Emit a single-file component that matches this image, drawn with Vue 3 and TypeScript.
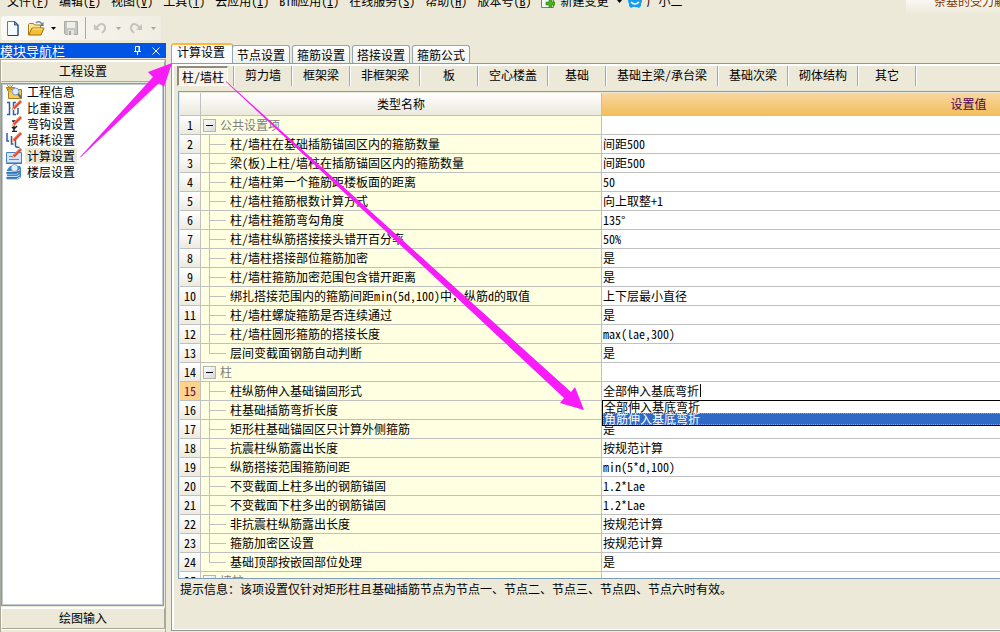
<script setup lang="ts">
import { ref } from 'vue'

interface MenuItem { label: string; key: string }
interface Row { no: number; parts: string[]; value: string; kind: 'group' | 'item' | 'last' }

const menus: MenuItem[] = [
  { label: '文件', key: 'F' },
  { label: '编辑', key: 'E' },
  { label: '视图', key: 'V' },
  { label: '工具', key: 'T' },
  { label: '云应用', key: 'I' },
  { label: 'Bim应用', key: 'I' },
  { label: '在线服务', key: 'S' },
  { label: '帮助', key: 'H' },
  { label: '版本号', key: 'B' },
]

const navItems = ['工程信息', '比重设置', '弯钩设置', '损耗设置', '计算设置', '楼层设置']
const activeNav = ref(4)

const tabs = ['计算设置', '节点设置', '箍筋设置', '搭接设置', '箍筋公式']
const activeTab = ref(0)

const kinds = ['柱/墙柱', '剪力墙', '框架梁', '非框架梁', '板', '空心楼盖', '基础', '基础主梁/承台梁', '基础次梁', '砌体结构', '其它']
const activeKind = ref(0)

const source: [string, string, Row['kind']?][] = [
  ['公共设置项', '', 'group'],
  ['柱/墙柱在基础插筋锚固区内的箍筋数量', '间距500'],
  ['梁(板)上柱/墙柱在插筋锚固区内的箍筋数量', '间距500'],
  ['柱/墙柱第一个箍筋距楼板面的距离', '50'],
  ['柱/墙柱箍筋根数计算方式', '向上取整+1'],
  ['柱/墙柱箍筋弯勾角度', '135°'],
  ['柱/墙柱纵筋搭接接头错开百分率', '50%'],
  ['柱/墙柱搭接部位箍筋加密', '是'],
  ['柱/墙柱箍筋加密范围包含错开距离', '是'],
  ['绑扎搭接范围内的箍筋间距min(5d,100)中，纵筋d的取值', '上下层最小直径'],
  ['柱/墙柱螺旋箍筋是否连续通过', '是'],
  ['柱/墙柱圆形箍筋的搭接长度', 'max(lae,300)'],
  ['层间变截面钢筋自动判断', '是', 'last'],
  ['柱', '', 'group'],
  ['柱纵筋伸入基础锚固形式', '全部伸入基底弯折'],
  ['柱基础插筋弯折长度', ''],
  ['矩形柱基础锚固区只计算外侧箍筋', '是'],
  ['抗震柱纵筋露出长度', '按规范计算'],
  ['纵筋搭接范围箍筋间距', 'min(5*d,100)'],
  ['不变截面上柱多出的钢筋锚固', '1.2*Lae'],
  ['不变截面下柱多出的钢筋锚固', '1.2*Lae'],
  ['非抗震柱纵筋露出长度', '按规范计算'],
  ['箍筋加密区设置', '按规范计算'],
  ['基础顶部按嵌固部位处理', '是', 'last'],
  ['墙柱', '', 'group'],
]
// Full-width commas are split off so that they keep a full cell beside half-width Latin.
const rows: Row[] = source.map(([label, value, kind], i) => ({
  no: i + 1,
  parts: label.split(/(，)/),
  value,
  kind: kind ?? 'item',
}))

const editing = 15
const editValue = ref('全部伸入基底弯折')
const options = ['全部伸入基底弯折', '角筋伸入基底弯折']
const hovered = ref(1)
</script>

<template>
  <div class="app">
    <header class="menubar">
      <nav class="menus">
        <a v-for="m in menus" :key="m.label" href="#">{{ m.label }}(<u>{{ m.key }}</u>)</a>
        <a href="#" class="with-icon">
          <svg width="14" height="14" viewBox="0 0 14 14">
            <path d="M.5 0h9l3 3v10.5H.5z" fill="#f4faff" stroke="#3c8ccc" />
            <path d="M8 5h3v3h3v3h-3v3H8v-3H5V8h3z" fill="#4caf1c" stroke="#2c7c10" stroke-width=".6" />
          </svg>
          新建变更
        </a>
        <svg class="drop" width="5" height="3" viewBox="0 0 5 3"><path d="M0 0h5L2.500 3z" fill="#000" /></svg>
        <a href="#" class="with-icon user">
          <svg width="14" height="14" viewBox="0 0 14 14">
            <path d="M0 0h14v7q0 2-1 2v3l-2 2-2-1H5l-2 1-2-2V9Q0 9 0 7z" fill="#189cf0" />
            <path d="M3 8q4 4 8 0" fill="none" stroke="#fff" stroke-width="1.500" />
          </svg>
          广小二
        </a>
      </nav>
      <a href="#" class="news">条基的受力解析</a>
    </header>

    <div class="toolbar">
      <button type="button" aria-label="新建">
        <svg width="12" height="15" viewBox="0 0 12 15">
          <path d="M.5.5h7.500l3 3v11H.5z" fill="#f5faff" stroke="#5a7ba4" />
          <path d="M11 4v10.500H1" fill="none" stroke="#1d3c68" />
          <path d="M7.500.500v3.500h3.500z" fill="#86a8cc" stroke="#36557e" />
        </svg>
      </button>
      <button type="button" aria-label="打开" class="open">
        <svg width="17" height="15" viewBox="0 0 17 15">
          <path d="M.5 13.500V3.500l1-1h4l1 1.500h6v3" fill="#fbe694" stroke="#a97817" />
          <path d="M.5 14l3.500-7h12l-3 7z" fill="#f5bf35" stroke="#a06c0c" />
          <path d="M4.500 8h10" stroke="#fff0ad" />
          <path d="M8 2q3-3 6 1" fill="none" stroke="#6c8bae" stroke-width="1.500" />
          <path d="M15.500 1v4h-4z" fill="#54779f" />
        </svg>
      </button>
      <svg width="5" height="3" viewBox="0 0 5 3"><path d="M0 0h5L2.500 3z" fill="#000" /></svg>
      <button type="button" aria-label="保存" class="save" disabled>
        <svg width="14" height="14" viewBox="0 0 14 14">
          <path d="M.5.5h13v13h-12l-1-1z" fill="#c5c5c1" stroke="#aaa9a3" />
          <path d="M3 1h8v6H3z" fill="#eeeeea" />
          <path d="M4 9h6v5H4z" fill="#e3e3df" /><path d="M5 10h2v4H5z" fill="#a6a6a0" />
        </svg>
      </button>
      <span class="sep"></span>
      <button type="button" aria-label="撤销" class="undo" disabled>
        <svg width="13" height="12" viewBox="0 0 13 12">
          <path d="M2.500 5.500Q7 0 10 3q3 4-2 8" fill="none" stroke="#c4c3bc" stroke-width="2" />
          <path d="M0 2v6h6z" fill="#c4c3bc" />
        </svg>
      </button>
      <svg width="5" height="3" viewBox="0 0 5 3"><path d="M0 0h5L2.500 3z" fill="#aca899" /></svg>
      <button type="button" aria-label="恢复" class="redo" disabled>
        <svg width="13" height="12" viewBox="0 0 13 12">
          <path d="M10.500 5.500Q6 0 3 3q-3 4 2 8" fill="none" stroke="#c4c3bc" stroke-width="2" />
          <path d="M13 2v6H7z" fill="#c4c3bc" />
        </svg>
      </button>
      <svg width="5" height="3" viewBox="0 0 5 3"><path d="M0 0h5L2.500 3z" fill="#aca899" /></svg>
    </div>

    <div class="body">
      <aside class="side">
        <div class="side-title">
          <span>模块导航栏</span>
          <button type="button" aria-label="固定" class="pin">
            <svg width="8" height="9" viewBox="0 0 8 9">
              <path d="M1.500 5V.5h4V5M5 0v5M0 5.500h7M3.500 6v3" fill="none" stroke="#fff" />
            </svg>
          </button>
          <button type="button" aria-label="关闭">
            <svg width="8" height="8" viewBox="0 0 8 8"><path d="M.5.500l7 7M7.500.500l-7 7" stroke="#fff" /></svg>
          </button>
        </div>
        <div class="side-frame">
          <button type="button" class="side-group">工程设置</button>
          <ul class="nav">
            <li v-for="(n, i) in navItems" :key="n">
              <svg width="16" height="16" viewBox="0 0 16 16">
                <g v-if="i === 0">
                  <path d="M.5 3.500h8l1 2h6v9H2.500v-7z" fill="#f5cf55" stroke="#a87a1d" />
                  <path d="M4 0v8M0 4h8M1 1l6 6M7 1L1 7" stroke="#c78c12" />
                  <circle cx="9.500" cy="7.500" r="3.500" fill="#dcecfb" stroke="#7890b0" />
                  <path d="M12 10l3 3.500" stroke="#55657e" stroke-width="2" />
                </g>
                <g v-else-if="i === 5">
                  <path d="M4 2h10l1 2v9l-3 2.500H1V6z" fill="#3e86c8" />
                  <path d="M1 7.500h10l3-2M1 10h10l3-2M1 12.500h10l3-2M1 15h10l3-2" fill="none" stroke="#c9e3f8" />
                  <path d="M0 9h11M0 14h11" stroke="#185d9e" />
                  <circle cx="8.500" cy="4" r="3.500" fill="#e2effa" stroke="#8ba0b8" />
                  <path d="M11 7l3 3" stroke="#697b8f" stroke-width="2" />
                </g>
                <g v-else>
                  <path v-if="i === 1" d="M1 2.500h2.500v12H1M10 2.500H7.500v12H10M3.500 8h1M12 8v5l-1 1.500" fill="none" stroke="#315f9d" stroke-width="1.500" />
                  <path v-if="i === 2" d="M6 5h4M8 5v10M6 15.500h5M6 11l2 2 3-3" fill="none" stroke="#222" stroke-width="1.500" />
                  <path v-if="i === 3" d="M1 1v8h2M5.500 4v8h2M9.500 6v8q0 1.500 4 1.500" fill="none" stroke="#315f9d" stroke-width="1.500" />
                  <g v-if="i === 4">
                    <path d="M.5 4.500h15v11H.5z" fill="#d4e7fa" stroke="#4d80bd" />
                    <path d="M3 8.500h6M3 11.500h10" stroke="#5f8dc4" />
                    <path d="M1 15h15" stroke="#356ca9" />
                  </g>
                  <path d="M14 0l2 2-7 7-3 1 1-3z" fill="#e8482e" />
                  <path d="M14 .5L7.500 7" stroke="#ff9b75" />
                  <path d="M7 7.500l2 2-3 1z" fill="#f4c79b" />
                </g>
              </svg>
              <button type="button" :class="{ on: i === activeNav }" @click="activeNav = i">{{ n }}</button>
            </li>
          </ul>
          <button type="button" class="side-group">绘图输入</button>
          <div class="side-end"></div>
        </div>
      </aside>

      <main class="main">
        <div class="tabs" role="tablist">
          <button v-for="(t, i) in tabs" :key="t" type="button" role="tab" :aria-selected="i === activeTab" :class="{ on: i === activeTab }" @click="activeTab = i">{{ t }}</button>
        </div>
        <section class="panel">
          <ul class="kinds">
            <li v-for="(k, i) in kinds" :key="k" :class="{ on: i === activeKind }">
              <button type="button" @click="activeKind = i">{{ k }}</button>
            </li>
          </ul>
          <div class="grid">
            <table>
              <colgroup><col class="c-no" /><col class="c-name" /><col class="c-value" /></colgroup>
              <thead>
                <tr><th></th><th>类型名称</th><th class="hot">设置值</th></tr>
              </thead>
              <tbody>
                <tr v-for="r in rows" :key="r.no" :class="[r.kind, { editing: r.no === editing }]">
                  <td class="no">{{ r.no }}</td>
                  <td class="name">
                    <div class="cell">
                      <button v-if="r.kind === 'group'" type="button" class="fold" aria-label="折叠"></button>
                      <span v-else class="branch"></span>
                      <span v-for="(p, i) in r.parts" :key="i" :class="{ full: p === '，' }">{{ p }}</span>
                    </div>
                  </td>
                  <td class="value">
                    <div v-if="r.no === editing" class="combo">
                      <input v-model="editValue" type="text" aria-label="柱纵筋伸入基础锚固形式" /><span class="caret"></span>
                      <ul class="options" role="listbox">
                        <li v-for="(o, i) in options" :key="o" role="option" :aria-selected="i === hovered" :class="{ on: i === hovered }" @mouseenter="hovered = i" @click="editValue = o">{{ o }}</li>
                      </ul>
                    </div>
                    <template v-else>{{ r.value }}</template>
                  </td>
                </tr>
              </tbody>
            </table>
          </div>
          <p class="hint">提示信息：该项设置仅针对矩形柱且基础插筋节点为节点一、节点二、节点三、节点四、节点六时有效。</p>
        </section>
      </main>
    </div>

    <svg class="arrows" width="1000" height="632" viewBox="0 0 1000 632" aria-hidden="true">
      <path d="M80 157L153 77L148 72L172 63L164 87L159 83L81 157Z" />
      <path d="M226 81L571 392L575 387L584 410L560 403L564 398L226 82Z" />
    </svg>
  </div>
</template>

<style>
body {
  margin: 0;
  background: #ece9d8;
}
</style>

<style scoped>
.app {
  position: relative;
  display: flex;
  flex-direction: column;
  height: 100vh;
  overflow: hidden;
  background: #ece9d8;
  color: #000;
  font: 12px/14px "Noto Sans CJK SC", "Liberation Sans", sans-serif;
  font-feature-settings: "hwid";
}
.app * { box-sizing: border-box; }
button, input {
  font: inherit;
  font-feature-settings: inherit;
  color: inherit;
  padding: 0;
  margin: 0;
  border: 0;
  background: none;
}
ul { list-style: none; margin: 0; padding: 0; }
svg { display: block; flex: none; }
a { color: inherit; text-decoration: none; white-space: nowrap; }

.menubar {
  display: flex;
  justify-content: space-between;
  flex: none;
  height: 16px;
}
.menus {
  display: flex;
  align-items: flex-end;
  gap: 10px;
  height: 8px;
  padding-left: 7px;
}
.with-icon { display: flex; align-items: flex-end; gap: 5px; }
.user { gap: 4px; margin-left: -4px; }
.drop { margin: 0 0 5px -1px; }
.news {
  display: flex;
  align-items: flex-end;
  width: 94px;
  height: 15px;
  padding: 0 0 7px 28px;
  color: #7b3300;
  background: linear-gradient(#f9f7f2, #ece9d8);
}

.toolbar {
  display: flex;
  align-items: center;
  flex: none;
  width: 160px;
  height: 24px;
  margin: 0 0 3px 1px;
  padding-left: 6px;
  border-radius: 3px;
  background: linear-gradient(90deg, #faf9f5, #f0eee2);
}
.open { margin: 0 6px 0 9px; }
.save { margin: 0 7px 0 8px; }
.sep { width: 1px; height: 22px; background: #aca899; }
.undo { margin: 0 9px 0 8px; }
.redo { margin: 0 9px 0 8px; }

.body { display: flex; flex: 1; min-height: 0; }
.side {
  display: flex;
  flex-direction: column;
  flex: none;
  width: 166px;
  margin-right: 5px;
}
.side-title {
  display: flex;
  align-items: center;
  gap: 10px;
  height: 15px;
  padding-right: 6px;
  background: #0055e5;
  color: #fff;
  font-size: 13px;
}
.pin { margin-left: auto; }
.side-frame {
  display: flex;
  flex-direction: column;
  flex: 1;
  min-height: 0;
  margin-top: 1px;
  border: 1px solid #aca899;
  border-bottom: 0;
}
.side-group {
  flex: none;
  height: 22px;
  padding-bottom: 2px;
  border: 1px solid #aca899;
  border-top: 2px solid #fff;
  border-left-color: #fff;
}
.side-end { height: 3px; border-top: 1px solid #fff; }
.nav {
  flex: 1;
  min-height: 0;
  margin: 1px 1px 1px 0;
  padding: 0 4px;
  border: 1px solid #7f9db9;
  outline: 1px solid #bccbd8;
  outline-offset: -2px;
  background: #fff;
}
.nav li { display: flex; align-items: center; gap: 3px; height: 16px; }
.nav button { height: 16px; padding: 0 2px; line-height: 16px; }
.nav button.on { background: #ece9d8; }

.main { display: flex; flex-direction: column; flex: 1; min-width: 0; }
.tabs { display: flex; align-items: flex-end; gap: 2px; height: 20px; flex: none; }
.tabs button {
  width: 58px;
  height: 18px;
  border: 1px solid #91a7b4;
  border-bottom: 0;
  border-radius: 3px 3px 0 0;
  background: linear-gradient(#fff, #f0f0ea);
}
.tabs button.on {
  width: 62px;
  height: 20px;
  margin: 0 -3px 0 0;
  padding: 0 2px 4px 0;
  border-top: 2px solid #ffb83c;
  background: #fcfcfe;
}
.panel {
  display: flex;
  flex-direction: column;
  flex: 1;
  min-height: 0;
  margin-bottom: 1px;
  padding-left: 3px;
  border: 1px solid #919b9c;
  border-right: 0;
  box-shadow: inset 2px 2px #fff, inset 0 -1px #fff;
}
.kinds { display: flex; flex: none; margin: 2px 0 5px 2px; }
.kinds li {
  min-width: 58px;
  height: 20px;
  padding: 0 10px;
  border-right: 1px solid #fff;
  box-shadow: inset -1px 0 #aca899;
  text-align: center;
}
.kinds button { height: 18px; white-space: nowrap; }
.kinds li:not(.on) button { padding: 0 1px 0 0; }
.kinds li.on { padding: 0 6px 0 0; }
.kinds li.on button {
  width: 100%;
  height: 20px;
  border: 1px solid;
  border-width: 2px 1px 1px 2px;
  border-color: #8f8c7e #fff #fff #8f8c7e;
  background: #f6f4ec;
}

.grid {
  flex: 1;
  min-height: 0;
  overflow: hidden;
  margin-left: 3px;
  padding: 1px 0 1px 1px;
  border: 1px solid #7f9db9;
  border-right: 0;
  background: #fff;
  background-clip: content-box;
}
table {
  table-layout: fixed;
  width: 1156px;
  border-collapse: separate;
  border-spacing: 0;
}
.c-no { width: 21px; }
.c-name { width: 401px; }
.c-value { width: 734px; }
th, td {
  height: 19px;
  padding: 0;
  border: 1px solid #c0c0c0;
  border-width: 0 1px 1px 0;
  line-height: 14px;
  white-space: nowrap;
}
th {
  height: 23px;
  font-weight: normal;
  background: linear-gradient(#fff, #ebe9dc);
}
th.hot { color: #4b0058; background: linear-gradient(#f9d6a0, #f1bf5c); }
.no { text-align: center; background: linear-gradient(#fff, #edeade); }
.editing .no { color: #620062; background: #ffd28c; }
.name { background: #ffffe1; }
.cell { display: flex; align-items: center; height: 18px; }
.full { font-feature-settings: normal; }
.branch {
  align-self: stretch;
  width: 17px;
  margin: 0 4px 0 8px;
  background:
    linear-gradient(#c0c0c0, #c0c0c0) 0 0 / 1px 100% no-repeat,
    linear-gradient(#c0c0c0, #c0c0c0) 0 9px / 17px 1px no-repeat;
}
.item .cell { height: 19px; margin-bottom: -1px; padding-bottom: 1px; }
.last .branch {
  background:
    linear-gradient(#c0c0c0, #c0c0c0) 0 0 / 1px 10px no-repeat,
    linear-gradient(#c0c0c0, #c0c0c0) 0 9px / 17px 1px no-repeat;
}
.group .cell { color: #808080; }
.fold {
  width: 13px;
  height: 13px;
  margin: 0 4px 0 2px;
  border: 1px solid #b4b4b4;
  background:
    linear-gradient(#000, #000) center / 7px 1px no-repeat,
    linear-gradient(135deg, #fff, #d8d8d8);
}
.value { padding: 0 0 1px 1px; background: #fff; }
.combo { position: relative; display: flex; height: 14px; }
.combo input { width: 97px; height: 14px; outline: none; }
.caret { width: 1px; height: 13px; background: #000; }
.options {
  position: absolute;
  z-index: 1;
  top: 16px;
  left: -1px;
  right: 0;
  border: 1px solid #000;
  background: #fff;
}
.options li { height: 12px; padding-left: 1px; line-height: 12px; }
.options li.on {
  padding-left: 0;
  border: 1px dotted #e0a040;
  line-height: 10px;
  background: #316ac5;
  color: #fff;
}
.hint { flex: none; height: 51px; margin: 0; padding: 3px 0 0 5px; }

.arrows {
  position: absolute;
  top: 0;
  left: 0;
  fill: #f81cf8;
  pointer-events: none;
}
</style>
